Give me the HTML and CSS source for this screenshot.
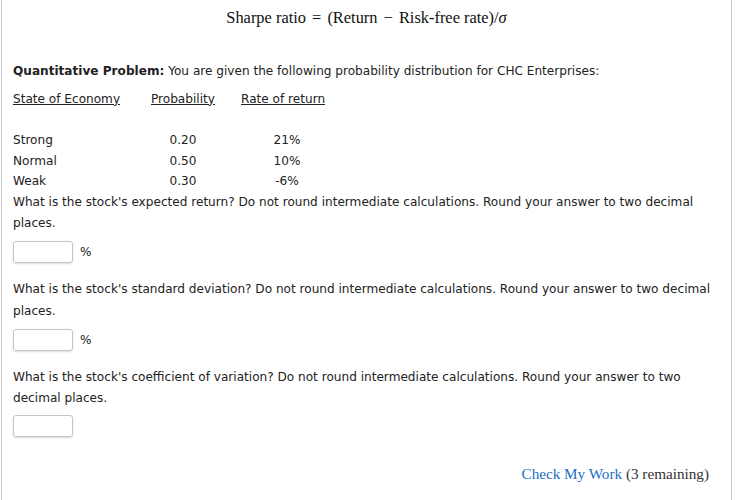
FILE: index.html
```html
<!DOCTYPE html>
<html>
<head>
<meta charset="utf-8">
<link rel="stylesheet" href="styles.css">
</head>
<body>
<div class="panel">
  <div class="formula">Sharpe ratio <span class="op">=</span> (Return <span class="op">&minus;</span> Risk-free rate)/<i>σ</i></div>
  <p class="intro"><b>Quantitative Problem:</b> You are given the following probability distribution for CHC Enterprises:</p>
  <table class="dist">
    <tr class="head">
      <td class="c1"><u>State of Economy</u></td>
      <td class="c2"><u>Probability</u></td>
      <td class="c3"><u>Rate of return</u></td>
    </tr>
    <tr class="spacer"><td></td><td></td><td></td></tr>
    <tr><td class="c1">Strong</td><td class="c2 num">0.20</td><td class="c3 num">21%</td></tr>
    <tr><td class="c1">Normal</td><td class="c2 num">0.50</td><td class="c3 num">10%</td></tr>
    <tr><td class="c1">Weak</td><td class="c2 num">0.30</td><td class="c3 num">-6%</td></tr>
  </table>
  <p class="q">What is the stock's expected return? Do not round intermediate calculations. Round your answer to two decimal places.</p>
  <div class="answer"><span class="box"></span><span class="unit">%</span></div>
  <p class="q">What is the stock's standard deviation? Do not round intermediate calculations. Round your answer to two decimal places.</p>
  <div class="answer"><span class="box"></span><span class="unit">%</span></div>
  <p class="q">What is the stock's coefficient of variation? Do not round intermediate calculations. Round your answer to two decimal places.</p>
  <div class="answer last"><span class="box"></span></div>
  <div class="footer"><a class="check">Check My Work</a> (3 remaining)</div>
</div>
</body>
</html>
```
FILE: styles.css
```css
html, body {
  margin: 0;
  padding: 0;
  background: #fff;
}
body {
  font-family: "DejaVu Sans", Verdana, sans-serif;
  font-size: 12.1px;
  color: #222;
}
.panel {
  margin-left: 1px;
  width: 707px;
  height: 500px;
  border-left: 1px solid #c8c8c8;
  border-right: 1px solid #c8c8c8;
  padding: 0 11px;
  box-sizing: content-box;
}
.formula {
  font-family: "Liberation Serif", "DejaVu Serif", serif;
  font-size: 16.4px;
  text-align: center;
  padding-top: 8px;
  line-height: 20px;
  color: #111;
}
.formula .op { padding: 0 2px; }
.intro {
  margin: 0;
  margin-top: 33px;
  line-height: 21px;
}
.dist {
  border-collapse: collapse;
  margin-top: 6.5px;
}
.dist td {
  padding: 0;
  height: 20.5px;
  line-height: 20px;
  vertical-align: middle;
  white-space: nowrap;
}
.dist .spacer td { height: 21px; }
.c1 { width: 112px; padding-right: 26px !important; }
.c2 { width: 64px; padding-right: 26px !important; }
.c3 { width: 84px; }
.num { text-align: center; }
.c3.num { padding-left: 4px !important; }
.q {
  margin: 0;
  line-height: 21.5px;
}
.answer {
  display: flex;
  align-items: center;
  gap: 7px;
  margin: 6.5px 0 16px;
  height: 22px;
}
.answer.last { margin-top: 5px; }
.box {
  display: inline-block;
  width: 58px;
  height: 20px;
  border: 1px solid #c6c6c6;
  border-radius: 3px;
  box-shadow: 0 1px 2px rgba(0,0,0,0.15);
}
.footer {
  text-align: right;
  font-family: "Liberation Serif", Georgia, serif;
  font-size: 15.2px;
  line-height: 20px;
  margin-top: 27px;
  padding-right: 11px;
  color: #333;
}
.check { color: #1a6fc4; }
```
